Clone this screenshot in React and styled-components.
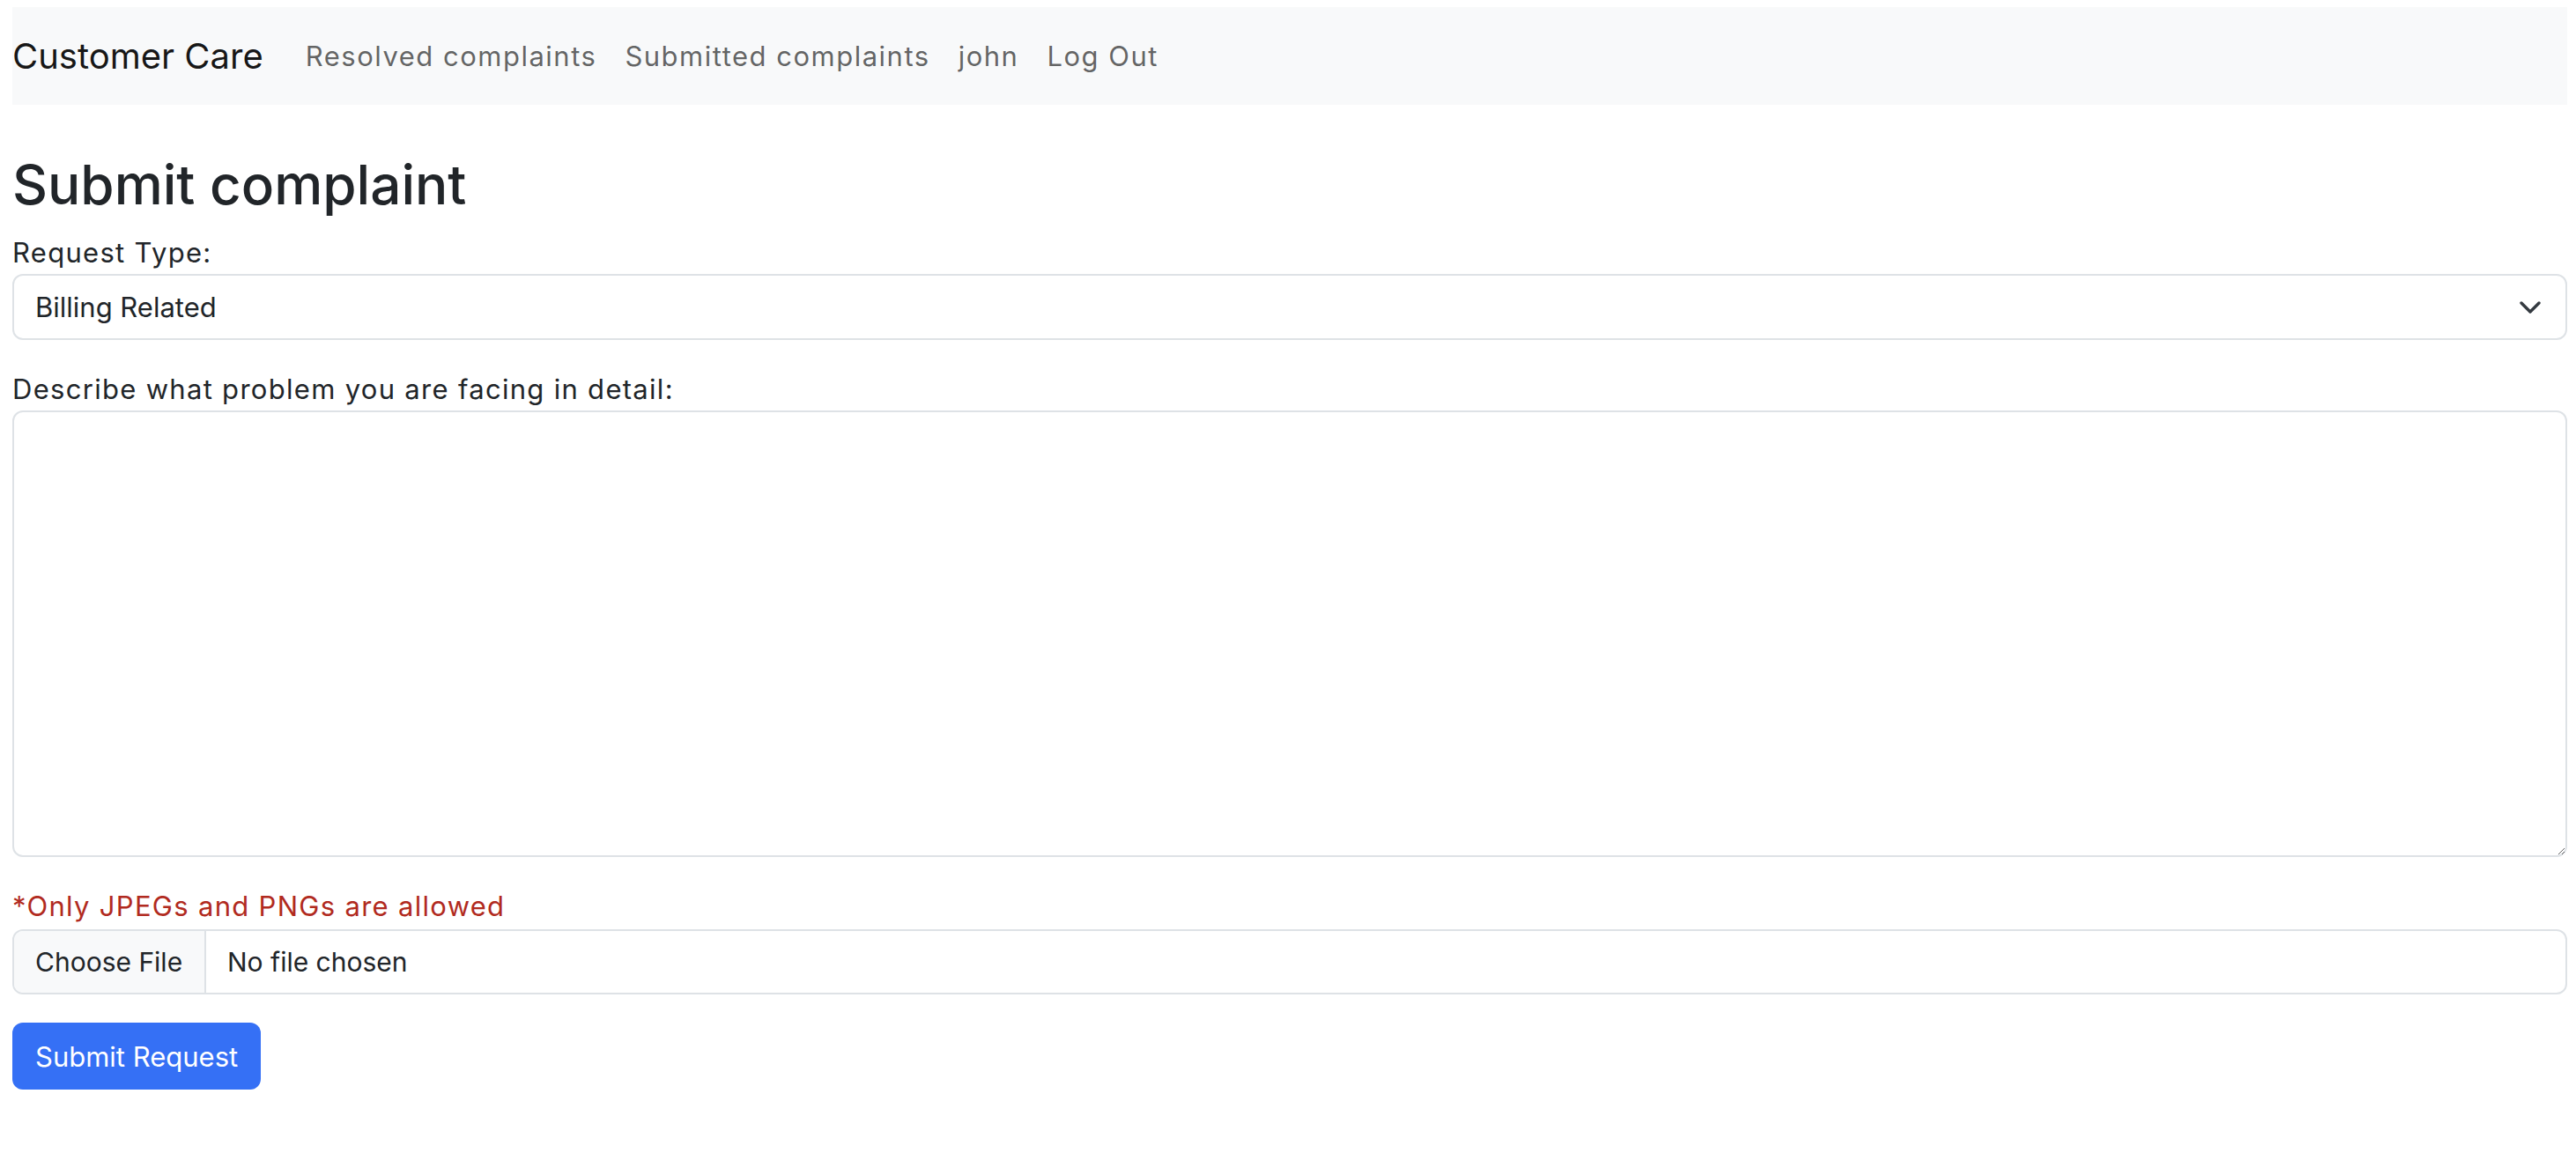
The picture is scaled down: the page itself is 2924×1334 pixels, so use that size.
import React from "react";
import styled, { createGlobalStyle } from "styled-components";

const GlobalStyle = createGlobalStyle`
  body {
    margin: 8px 10px 8px 14px;
    font-family: Inter, "Noto Sans", "Liberation Sans", sans-serif;
    color: #212529;
    background: #fff;
  }
  * {
    box-sizing: border-box;
  }
`;

const Navbar = styled.nav`
  display: flex;
  align-items: center;
  height: 111px;
  background-color: #f8f9fa;
`;

const Brand = styled.a`
  font-size: 40px;
  line-height: 60px;
  color: rgba(0, 0, 0, 0.92);
  text-decoration: none;
  margin-right: 32px;
`;

const NavLink = styled.a`
  font-size: 31px;
  line-height: 48px;
  letter-spacing: 1.5px;
  padding: 0 16px;
  color: rgba(0, 0, 0, 0.62);
  text-decoration: none;
`;

const Title = styled.h1`
  font-size: 62px;
  font-weight: 500;
  line-height: 1.2;
  margin: 54px 0 16px;
`;

const Field = styled.div`
  margin-bottom: 32px;
`;

const Label = styled.label`
  display: block;
  font-size: 31px;
  line-height: 48px;
  letter-spacing: 1.3px;
  color: ${({ $warn }) => ($warn ? "#b12a20" : "#212529")};
  margin-bottom: ${({ $warn }) => ($warn ? "2px" : "0")};
`;

const SelectBox = styled.div`
  position: relative;
  height: 75px;
  border: 2px solid #dee2e6;
  border-radius: 12px;
  display: flex;
  align-items: center;
  padding: 0 24px;
  font-size: 31px;
  color: #212529;
  svg {
    position: absolute;
    right: 28px;
    top: 50%;
    transform: translateY(-50%);
  }
`;

const TextArea = styled.textarea`
  display: block;
  width: 100%;
  height: 507px;
  border: 2px solid #dee2e6;
  border-radius: 12px;
  resize: vertical;
  font-family: inherit;
  font-size: 31px;
  padding: 12px 24px;
  outline: none;
`;

const FileInput = styled.div`
  display: flex;
  height: 74px;
  border: 2px solid #dee2e6;
  border-radius: 12px;
  overflow: hidden;
  font-size: 30px;
  white-space: nowrap;
`;

const FileButton = styled.span`
  display: flex;
  align-items: center;
  flex: 0 0 218px;
  padding: 0 24px;
  background-color: #f8f9fa;
  border-right: 2px solid #dee2e6;
  color: #212529;
`;

const FileName = styled.span`
  display: flex;
  align-items: center;
  padding: 0 24px;
  color: #212529;
`;

const SubmitButton = styled.button`
  width: 282px;
  height: 76px;
  border: none;
  border-radius: 12px;
  background-color: #3570f5;
  color: #fff;
  font-family: inherit;
  font-size: 31px;
  padding: 0 26px;
  text-align: left;
  white-space: nowrap;
`;

const Chevron = () => (
  <svg width="24" height="16" viewBox="0 0 24 16" fill="none">
    <path
      d="M2 3l10 10 10-10"
      stroke="#343a40"
      strokeWidth="3.4"
      strokeLinecap="round"
      strokeLinejoin="round"
    />
  </svg>
);

export default function App() {
  return (
    <>
      <GlobalStyle />
      <Navbar>
        <Brand href="#">Customer Care</Brand>
        <NavLink href="#">Resolved complaints</NavLink>
        <NavLink href="#">Submitted complaints</NavLink>
        <NavLink href="#">john</NavLink>
        <NavLink href="#">Log Out</NavLink>
      </Navbar>
      <Title>Submit complaint</Title>
      <Field>
        <Label>Request Type:</Label>
        <SelectBox>
          Billing Related
          <Chevron />
        </SelectBox>
      </Field>
      <Field>
        <Label>Describe what problem you are facing in detail:</Label>
        <TextArea />
      </Field>
      <Field>
        <Label $warn>*Only JPEGs and PNGs are allowed</Label>
        <FileInput>
          <FileButton>Choose File</FileButton>
          <FileName>No file chosen</FileName>
        </FileInput>
      </Field>
      <SubmitButton>Submit Request</SubmitButton>
    </>
  );
}
